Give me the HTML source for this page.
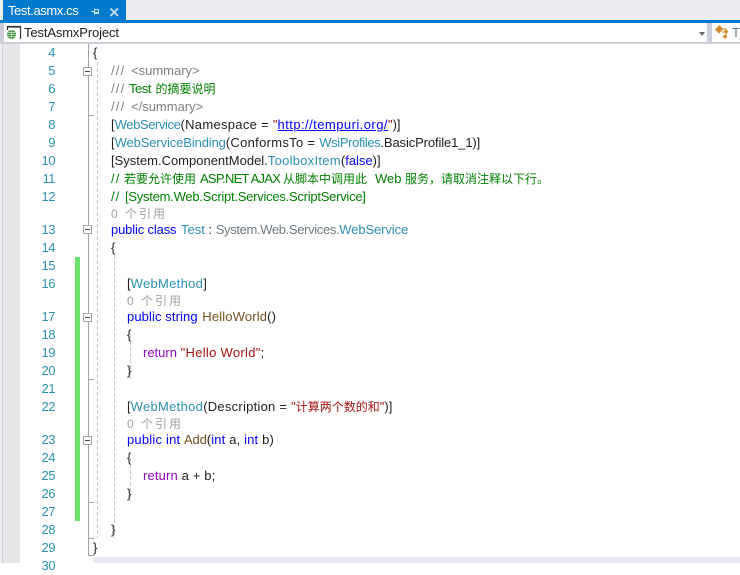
<!DOCTYPE html>
<html><head><meta charset="utf-8"><style>
html,body{margin:0;padding:0}
body{width:740px;height:563px;overflow:hidden;position:relative;background:#fff;font-family:"Liberation Sans","Noto Sans CJK SC",sans-serif;font-size:13px;color:#1e1e1e}
.a{position:absolute}
.l{position:absolute;white-space:pre;line-height:18px;height:18px}
.n{position:absolute;left:20px;width:35px;text-align:right;line-height:18px;color:#2b91af;letter-spacing:-.5px}
.k{color:#0000ff}.t{color:#2b91af}.c{color:#008000}.d{color:#808080}.s{color:#a31515}.p{color:#8f08c4}.m{color:#74531f}.g{color:#a0a0a0;font-size:12px;letter-spacing:2px}
.z{font-size:12px}
.sl{letter-spacing:1.2px}
.box{position:absolute;left:83px;width:7px;height:7px;border:1px solid #a5a5a5;background:#fff;box-sizing:content-box}
.box:after{content:"";position:absolute;left:1px;top:3px;width:5px;height:1px;background:#444}
.h{position:absolute;left:88px;width:6px;height:1px;background:#a5a5a5}
.v{position:absolute;width:1px;background:repeating-linear-gradient(to bottom,#c8c8c8 0,#c8c8c8 4px,transparent 4px,transparent 6px)}
</style></head><body>
<div class="a" style="left:0;top:0;width:740px;height:20px;background:#eeeef2"></div>
<div class="a" style="left:3px;top:0;width:123px;height:20px;background:#007acc"></div>
<div class="a" style="left:8px;top:2px;color:#fff;line-height:18px;font-size:13px;letter-spacing:-.4px">Test.asmx.cs</div>
<svg class="a" style="left:90px;top:7px" width="32" height="11"><path d="M1 4.500h3M4.500 1.500v6M4.500 2.500h4v4h-4M4.500 5.500h4" stroke="#cfe6f6" fill="none"/><path d="M20.500 1.500l7.500 7.500M28 1.500l-7.500 7.500" stroke="#cfe6f6" stroke-width="1.6" fill="none"/></svg>
<div class="a" style="left:0;top:20px;width:740px;height:3px;background:#007acc"></div>
<div class="a" style="left:0;top:23px;width:740px;height:21px;background:#cccedb"></div>
<div class="a" style="left:4px;top:23px;width:703px;height:19px;background:#fff"></div>
<div class="a" style="left:712px;top:23px;width:28px;height:19px;background:#fff"></div>
<svg class="a" style="left:6px;top:25px" width="17" height="16"><path d="M1 2h13.500v12M1 1.500h14" stroke="#333" fill="none" stroke-width="1.2"/><path d="M1.500 1v4" stroke="#333" stroke-width="1.2"/><circle cx="5.500" cy="9.500" r="4.500" fill="#3a8f3a"/><path d="M1 9.500h9M5.500 5v9M2 7.500h7M2 11.500h7" stroke="#d5ead5" stroke-width=".7"/></svg>
<div class="a" style="left:24px;top:24px;line-height:18px;letter-spacing:-.13px">TestAsmxProject</div>
<div class="a" style="left:699px;top:32px;border:3px solid transparent;border-top:4px solid #666;border-bottom:0;width:0;height:0"></div>
<svg class="a" style="left:715px;top:25px" width="15" height="15"><path d="M5 4h6v7M11 7H7" stroke="#c77b1b" fill="none"/><path d="M0 4.500L4.500 0 8.500 4 4 8.500z" fill="#d08a2e"/><path d="M8.500 6.500l2.500-2 2.500 2-2.500 2.500zM7.500 11.500l2.500-2 2.500 2-2.500 2.500z" fill="#d08a2e"/></svg>
<div class="a" style="left:732px;top:24px;line-height:18px;color:#5c7f96">T</div>

<div class="a" style="left:0;top:44px;width:2px;height:519px;background:#eeeef2"></div>
<div class="a" style="left:2px;top:44px;width:1px;height:519px;background:#cccedb"></div>
<div class="a" style="left:3px;top:44px;width:17px;height:519px;background:#e6e7e8"></div>
<div class="a" style="left:75px;top:257px;width:5px;height:264px;background:#6ee06e"></div>
<div class="a" style="left:88px;top:44px;width:1px;height:512px;background:#a5a5a5"></div>
<div class="a" style="left:93px;top:557px;width:647px;height:6px;background:#e9e9f1"></div>

<div class="h" style="top:115px"></div><div class="h" style="top:379px"></div><div class="h" style="top:502px"></div><div class="h" style="top:538px"></div><div class="h" style="top:555px"></div>
<div class="box" style="top:67px"></div><div class="box" style="top:225px"></div><div class="box" style="top:313px"></div><div class="box" style="top:436px"></div>

<div class="v" style="left:97px;top:62px;height:476px"></div>
<div class="v" style="left:114px;top:255px;height:283px"></div>
<div class="v" style="left:130px;top:335px;height:44px"></div>
<div class="v" style="left:130px;top:458px;height:44px"></div>

<div class="n" style="top:44px">4</div>
<div class="n" style="top:62px">5</div>
<div class="n" style="top:80px">6</div>
<div class="n" style="top:98px">7</div>
<div class="n" style="top:116px">8</div>
<div class="n" style="top:134px">9</div>
<div class="n" style="top:152px">10</div>
<div class="n" style="top:170px">11</div>
<div class="n" style="top:188px">12</div>
<div class="n" style="top:221px">13</div>
<div class="n" style="top:239px">14</div>
<div class="n" style="top:257px">15</div>
<div class="n" style="top:275px">16</div>
<div class="n" style="top:308px">17</div>
<div class="n" style="top:326px">18</div>
<div class="n" style="top:344px">19</div>
<div class="n" style="top:362px">20</div>
<div class="n" style="top:380px">21</div>
<div class="n" style="top:398px">22</div>
<div class="n" style="top:431px">23</div>
<div class="n" style="top:449px">24</div>
<div class="n" style="top:467px">25</div>
<div class="n" style="top:485px">26</div>
<div class="n" style="top:503px">27</div>
<div class="n" style="top:521px">28</div>
<div class="n" style="top:539px">29</div>
<div class="n" style="top:557px">30</div>

<div class="l" style="left:93px;top:44px">{</div>
<div class="l d sl" style="left:111px;top:62px">///</div><div class="l d" style="left:131px;top:62px">&lt;summary&gt;</div>
<div class="l d sl" style="left:111px;top:80px">///</div><div class="l c" style="left:129px;top:80px"><span style="letter-spacing:-.5px">Test</span> <span class="z" style="margin-left:1px">的摘要说明</span></div>
<div class="l d sl" style="left:111px;top:98px">///</div><div class="l d" style="left:131px;top:98px">&lt;/summary&gt;</div>
<div class="l" style="left:111px;top:116px">[<span class="t" style="letter-spacing:-.4px">WebService</span><span style="letter-spacing:.3px">(Namespace = </span><span class="s">"</span><span style="color:#0000ff;text-decoration:underline;letter-spacing:.45px">http://tempuri.org/</span><span class="s">"</span>)]</div>
<div class="l" style="left:111px;top:134px">[<span class="t" style="letter-spacing:-.12px">WebServiceBinding</span><span style="letter-spacing:.3px">(ConformsTo = </span><span class="t" style="letter-spacing:-.35px">WsiProfiles</span><span style="letter-spacing:-.12px">.BasicProfile1_1)]</span></div>
<div class="l" style="left:111px;top:152px">[System.ComponentModel.<span class="t" style="letter-spacing:.27px">ToolboxItem</span>(<span class="k">false</span>)]</div>
<div class="l c sl" style="left:111px;top:170px">//</div>
<div class="l c z" style="left:124px;top:170px">若要允许使用</div>
<div class="l c" style="left:200px;top:170px;letter-spacing:-.75px">ASP.NET AJAX</div>
<div class="l c z" style="left:283px;top:170px">从脚本中调用此</div>
<div class="l c" style="left:375px;top:170px">Web</div>
<div class="l c z" style="left:405px;top:170px">服务，请取消注释以下行。</div>
<div class="l c sl" style="left:111px;top:188px">//</div>
<div class="l c" style="left:125px;top:188px;letter-spacing:-.25px">[System.Web.Script.Services.ScriptService]</div>
<div class="l g" style="left:111px;top:205px">0 个引用</div>
<div class="l" style="left:111px;top:221px"><span class="k" style="letter-spacing:-.15px">public class</span> <span class="t" style="margin-left:1px">Test</span> : <span style="color:#6f7a80;letter-spacing:-.35px">System.Web.Services.</span><span class="t" style="letter-spacing:-.1px">WebService</span></div>
<div class="l" style="left:111px;top:239px">{</div>
<div class="l" style="left:127px;top:275px">[<span class="t" style="letter-spacing:.3px">WebMethod</span>]</div>
<div class="l g" style="left:127px;top:292px">0 个引用</div>
<div class="l" style="left:127px;top:308px"><span class="k" style="letter-spacing:.1px">public string</span> <span style="letter-spacing:.15px"><span class="m" style="margin-left:1px">HelloWorld</span>()</span></div>
<div class="l" style="left:127px;top:326px">{</div>
<div class="l" style="left:143px;top:344px"><span class="p">return</span> <span class="s" style="letter-spacing:.3px">"Hello World"</span>;</div>
<div class="l" style="left:127px;top:362px">}</div>
<div class="l" style="left:127px;top:398px">[<span class="t" style="letter-spacing:.3px">WebMethod</span><span style="letter-spacing:.25px">(Description = </span><span class="s">"<span class="z">计算两个数的和</span>"</span>)]</div>
<div class="l g" style="left:127px;top:415px">0 个引用</div>
<div class="l" style="left:127px;top:431px"><span class="k" style="letter-spacing:.2px">public int</span> <span class="m" style="letter-spacing:-.1px">Add</span><span style="letter-spacing:.15px">(<span class="k">int</span> a, <span class="k">int</span> b)</span></div>
<div class="l" style="left:127px;top:449px">{</div>
<div class="l" style="left:143px;top:467px;letter-spacing:.15px"><span class="p">return</span> a + b;</div>
<div class="l" style="left:127px;top:485px">}</div>
<div class="l" style="left:111px;top:521px">}</div>
<div class="l" style="left:93px;top:539px">}</div>
</body></html>
